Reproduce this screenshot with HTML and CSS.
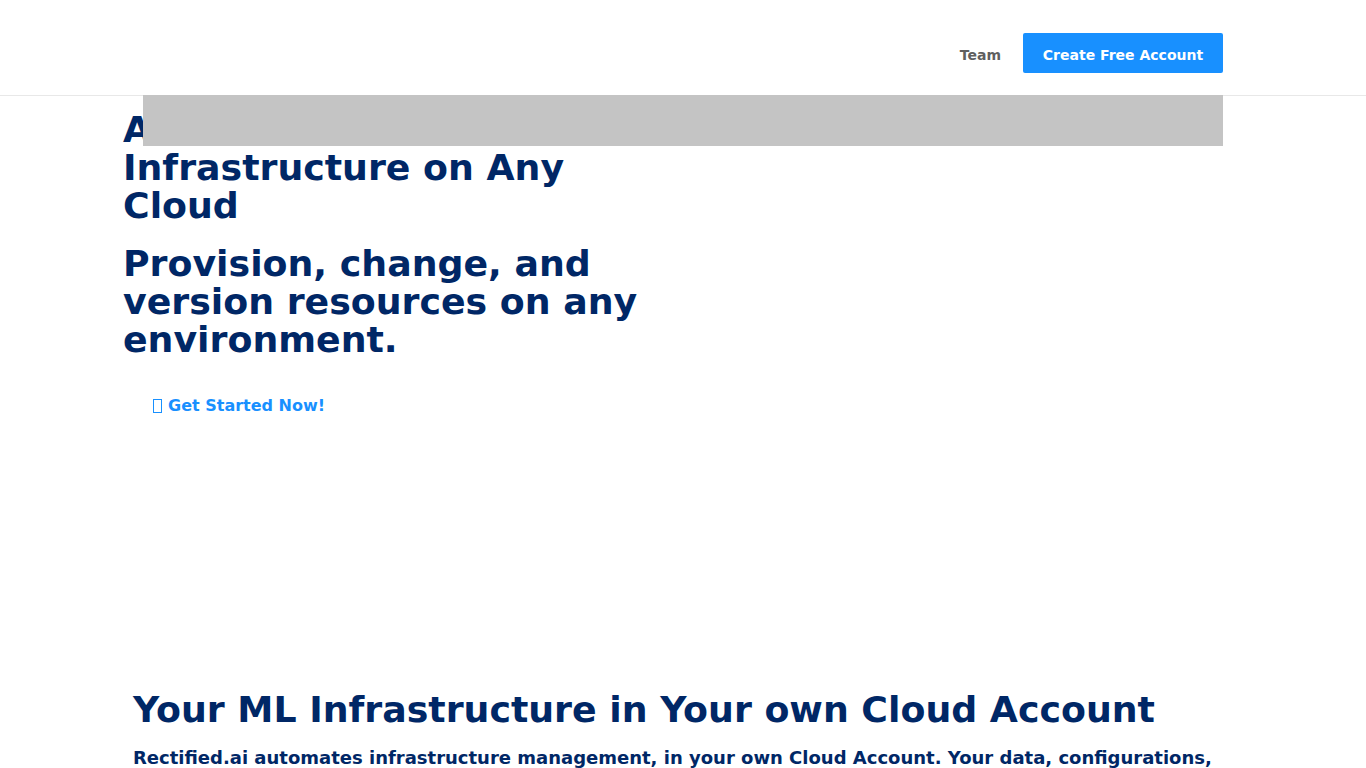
FILE: index.html
```html
<!DOCTYPE html>
<html>
<head>
<meta charset="utf-8">
<title>Rectified.ai</title>
<link rel="stylesheet" href="styles.css">
</head>
<body>
<header class="header">
  <div class="container nav">
    <a class="nav-link" href="#">Team</a>
    <a class="btn-primary" href="#">Create Free Account</a>
  </div>
</header>
<div class="banner"></div>
<main>
  <section class="container hero">
    <div class="hero-text">
      <h1 class="title">Automate ML Infrastructure on Any Cloud</h1>
      <h2 class="subtitle">Provision, change, and version resources on any environment.</h2>
      <a class="cta" href="#"><span class="tofu"></span>Get Started Now!</a>
    </div>
  </section>
  <section class="container features">
    <h2 class="feature-title">Your ML Infrastructure in Your own Cloud Account</h2>
    <p class="feature-text">Rectified.ai automates infrastructure management, in your own Cloud Account. Your data, configurations, and models are only accessible by you.</p>
  </section>
</main>
</body>
</html>
```
FILE: styles.css
```css
* { box-sizing: border-box; }
html, body { margin: 0; padding: 0; background: #fff; }
body { font-family: "DejaVu Sans", sans-serif; color: #002766; }
a { text-decoration: none; }

.container { margin: 0 143px 0 123px; }

.header { height: 96px; border-bottom: 1px solid #e8e8e8; }
.nav { height: 95px; display: flex; align-items: center; justify-content: flex-end; gap: 22px; padding-top: 11px; }
.nav-link { color: #5f5f5f; font-weight: bold; font-size: 14px; padding-top: 4px; }
.btn-primary { display: inline-flex; align-items: center; justify-content: center; width: 200px; height: 40px; padding-top: 4px; background: #1890ff; color: #fff; font-weight: bold; font-size: 14px; border-radius: 2px; }

.banner { position: absolute; left: 143px; top: 95px; width: 1080px; height: 51px; background: #c4c4c4; }

.hero { min-height: 595px; padding-top: 15px; }
.hero-text { width: 540px; }
.title, .subtitle { margin: 0; font-size: 36.3px; line-height: 38px; font-weight: bold; color: #002766; }
.subtitle { margin-top: 20px; }
.cta { display: inline-flex; align-items: center; margin-top: 35px; padding-left: 30px; color: #1890ff; font-weight: bold; font-size: 16px; line-height: 24px; }
.tofu { display: inline-block; width: 9px; height: 14px; border: 1.5px solid #1890ff; margin-right: 6px; }

.features { padding-left: 10px; }
.feature-title { margin: 0; font-size: 36.3px; line-height: 38px; font-weight: bold; color: #002766; }
.feature-text { margin: 15px 0 0; font-size: 18px; line-height: 27px; font-weight: bold; color: #002766; }
```
